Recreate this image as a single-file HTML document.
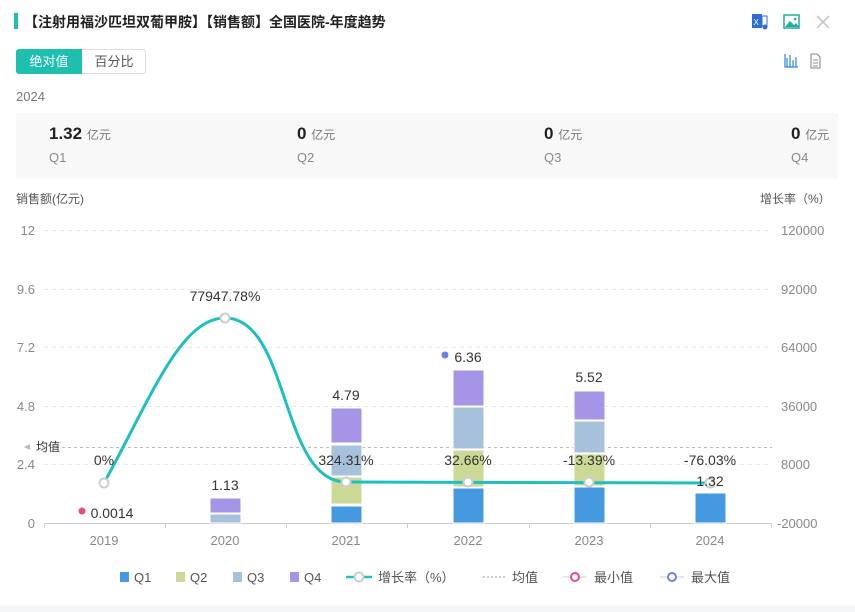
<!DOCTYPE html>
<html><head><meta charset="utf-8"><style>
body{margin:0;width:855px;height:612px;background:#fff;font-family:"Liberation Sans","Noto Sans CJK SC",sans-serif;position:relative;overflow:hidden}
.a{position:absolute;white-space:nowrap}
</style></head><body>
<div class="a" style="left:14px;top:13px;width:4px;height:16px;background:#1fbfb0"></div>
<div class="a" style="left:24px;top:12px;font-size:14px;font-weight:bold;color:#222">【注射用福沙匹坦双葡甲胺】【销售额】全国医院-年度趋势</div>
<svg class="a" style="left:750px;top:12px" width="90" height="20">
<rect x="2" y="2" width="10" height="14" fill="#2d6fd1"/><text x="3.5" y="13" font-size="8" fill="#fff" font-family="Liberation Sans">X</text><rect x="12" y="4" width="5" height="10" fill="none" stroke="#2d6fd1"/><circle cx="15" cy="15" r="2.5" fill="#2d6fd1"/>
<rect x="34" y="3" width="15" height="13" fill="#fff" stroke="#1fae9a" stroke-width="1.5"/><path d="M35 15 L40 9 L44 13 L46 11 L49 15Z" fill="#1fae9a"/><circle cx="45" cy="7" r="1.3" fill="#1fae9a"/>
<path d="M67 4 L79 16 M79 4 L67 16" stroke="#c8c8c8" stroke-width="1.6"/>
</svg>
<div class="a" style="left:16px;top:49px;width:130px;height:25px;border:1px solid #ddd;border-radius:3px;box-sizing:border-box"></div>
<div class="a" style="left:16px;top:49px;width:66px;height:25px;background:#1fbfb0;border-radius:3px 0 0 3px;color:#fff;font-size:13px;line-height:25px;text-align:center">绝对值</div>
<div class="a" style="left:82px;top:49px;width:64px;height:25px;color:#555;font-size:13px;line-height:25px;text-align:center">百分比</div>
<svg class="a" style="left:782px;top:52px" width="40" height="18">
<path d="M3 2v13h13 M5 15V6 M8 15V3 M11 15V8 M14 15V5" stroke="#2a88d8" stroke-width="1.2" fill="none"/>
<path d="M29 2h6l3 3v11h-9z M31 8h5 M31 11h5 M31 14h5" stroke="#888" stroke-width="1.1" fill="none"/>
</svg>
<div class="a" style="left:16px;top:89px;font-size:13px;color:#777">2024</div>
<div class="a" style="left:16px;top:113px;width:822px;height:66px;background:#f8f8f8"></div>
<div class="a" style="left:49px;top:124px;font-size:17px;font-weight:bold;color:#222">1.32 <span style="font-size:12px;font-weight:normal;color:#777">亿元</span></div>
<div class="a" style="left:49px;top:150px;font-size:13px;color:#888">Q1</div>
<div class="a" style="left:297px;top:124px;font-size:17px;font-weight:bold;color:#222">0 <span style="font-size:12px;font-weight:normal;color:#777">亿元</span></div>
<div class="a" style="left:297px;top:150px;font-size:13px;color:#888">Q2</div>
<div class="a" style="left:544px;top:124px;font-size:17px;font-weight:bold;color:#222">0 <span style="font-size:12px;font-weight:normal;color:#777">亿元</span></div>
<div class="a" style="left:544px;top:150px;font-size:13px;color:#888">Q3</div>
<div class="a" style="left:791px;top:124px;font-size:17px;font-weight:bold;color:#222">0 <span style="font-size:12px;font-weight:normal;color:#777">亿元</span></div>
<div class="a" style="left:791px;top:150px;font-size:13px;color:#888">Q4</div>
<div class="a" style="left:16px;top:190px;font-size:12px;color:#555">销售额(亿元)</div>
<div class="a" style="left:760px;top:190px;font-size:12px;color:#555">增长率（%）</div>
<svg class="a" style="left:0;top:0" width="855" height="612" font-family="Liberation Sans,Noto Sans CJK SC,sans-serif">
<g stroke="#e8e8e8" stroke-dasharray="4 4">
<line x1="44" x2="772" y1="230.5" y2="230.5"/><line x1="44" x2="772" y1="289.5" y2="289.5"/><line x1="44" x2="772" y1="347.5" y2="347.5"/><line x1="44" x2="772" y1="406.5" y2="406.5"/><line x1="44" x2="772" y1="464.5" y2="464.5"/>
</g>
<line x1="44" x2="772" y1="447.5" y2="447.5" stroke="#bbb" stroke-dasharray="3 3"/>
<path d="M24 447 l6 -3 v6z" fill="#bbb"/>
<text x="36" y="451" font-size="12" fill="#333">均值</text>
<line x1="44" x2="772" y1="523.5" y2="523.5" stroke="#ccc"/>
<g stroke="#ccc"><line x1="44.5" x2="44.5" y1="523" y2="528"/><line x1="165.5" x2="165.5" y1="523" y2="528"/><line x1="286.5" x2="286.5" y1="523" y2="528"/><line x1="407.5" x2="407.5" y1="523" y2="528"/><line x1="529.5" x2="529.5" y1="523" y2="528"/><line x1="650.5" x2="650.5" y1="523" y2="528"/><line x1="771.5" x2="771.5" y1="523" y2="528"/></g>
<g font-size="13" fill="#888" text-anchor="end">
<text x="35" y="235">12</text><text x="35" y="294">9.6</text><text x="35" y="352">7.2</text><text x="35" y="411">4.8</text><text x="35" y="469">2.4</text><text x="35" y="528">0</text></g>
<g font-size="13" fill="#888">
<text x="781" y="235">120000</text><text x="781" y="294">92000</text><text x="781" y="352">64000</text><text x="781" y="411">36000</text><text x="781" y="469">8000</text><text x="777" y="528">-20000</text></g>
<g font-size="13" fill="#888" text-anchor="middle">
<text x="104" y="545">2019</text><text x="225" y="545">2020</text><text x="346" y="545">2021</text><text x="468" y="545">2022</text><text x="589" y="545">2023</text><text x="710" y="545">2024</text></g>
<g stroke="#fff" stroke-width="1">
<rect x="210" y="514" width="31" height="9" fill="#a8c1da"/><rect x="210" y="498" width="31" height="15" fill="#a694e6"/>
<rect x="331" y="506" width="31" height="17" fill="#4499e0"/><rect x="331" y="477" width="31" height="27" fill="#cbd996"/><rect x="331" y="445" width="31" height="31" fill="#a8c1da"/><rect x="331" y="408" width="31" height="35" fill="#a694e6"/>
<rect x="453" y="488" width="31" height="35" fill="#4499e0"/><rect x="453" y="450" width="31" height="37" fill="#cbd996"/><rect x="453" y="407" width="31" height="42" fill="#a8c1da"/><rect x="453" y="370" width="31" height="36" fill="#a694e6"/>
<rect x="574" y="487" width="31" height="36" fill="#4499e0"/><rect x="574" y="454" width="31" height="32" fill="#cbd996"/><rect x="574" y="421" width="31" height="32" fill="#a8c1da"/><rect x="574" y="391" width="31" height="29" fill="#a694e6"/>
<rect x="695" y="493" width="31" height="30" fill="#4499e0"/>
</g>
<path d="M104 483 C150 400 180 318 225 318 C290 318 280 482 346 482 L710 483" fill="none" stroke="#1fbfc0" stroke-width="3"/>
<g fill="#fff" stroke="#ccc" stroke-width="2"><circle cx="104" cy="483" r="4.5"/><circle cx="225" cy="318" r="4.5"/><circle cx="346" cy="482" r="4.5"/><circle cx="468" cy="482" r="4.5"/><circle cx="589" cy="482" r="4.5"/><circle cx="710" cy="483" r="4.5"/></g>
<circle cx="82" cy="511" r="3.5" fill="#e84a8a"/><circle cx="445" cy="355" r="3.5" fill="#6c7ee8"/>
<g font-size="14" fill="#333" text-anchor="middle">
<text x="225" y="301">77947.78%</text><text x="104" y="465">0%</text><text x="346" y="465">324.31%</text><text x="468" y="465">32.66%</text><text x="589" y="465">-13.39%</text><text x="710" y="465">-76.03%</text>
<text x="225" y="490">1.13</text><text x="346" y="400">4.79</text><text x="468" y="362">6.36</text><text x="589" y="382">5.52</text><text x="710" y="486">1.32</text><text x="112" y="518">0.0014</text></g>
<g font-size="13" fill="#555">
<rect x="120" y="572" width="9" height="10" fill="#4499e0"/><text x="134" y="582">Q1</text>
<rect x="176" y="572" width="9" height="10" fill="#cbd996"/><text x="190" y="582">Q2</text>
<rect x="233" y="572" width="9" height="10" fill="#a8c1da"/><text x="247" y="582">Q3</text>
<rect x="290" y="572" width="9" height="10" fill="#a694e6"/><text x="304" y="582">Q4</text>
<line x1="346" x2="372" y1="577" y2="577" stroke="#1fbfc0" stroke-width="2.5"/><circle cx="359" cy="577" r="4.5" fill="#fff" stroke="#ccc" stroke-width="2"/><text x="378" y="582">增长率（%）</text>
<line x1="483" x2="507" y1="577" y2="577" stroke="#999" stroke-dasharray="2 2"/><text x="512" y="582">均值</text>
<line x1="563" x2="587" y1="577" y2="577" stroke="#ccc"/><circle cx="575" cy="577" r="4" fill="#fff" stroke="#e84a8a" stroke-width="2"/><text x="594" y="582">最小值</text>
<line x1="660" x2="684" y1="577" y2="577" stroke="#ccc"/><circle cx="672" cy="577" r="4" fill="#fff" stroke="#6c7ee8" stroke-width="2"/><text x="691" y="582">最大值</text>
</g>
<rect x="0" y="605" width="855" height="7" fill="#f4f5f7"/>
</svg>
</body></html>
